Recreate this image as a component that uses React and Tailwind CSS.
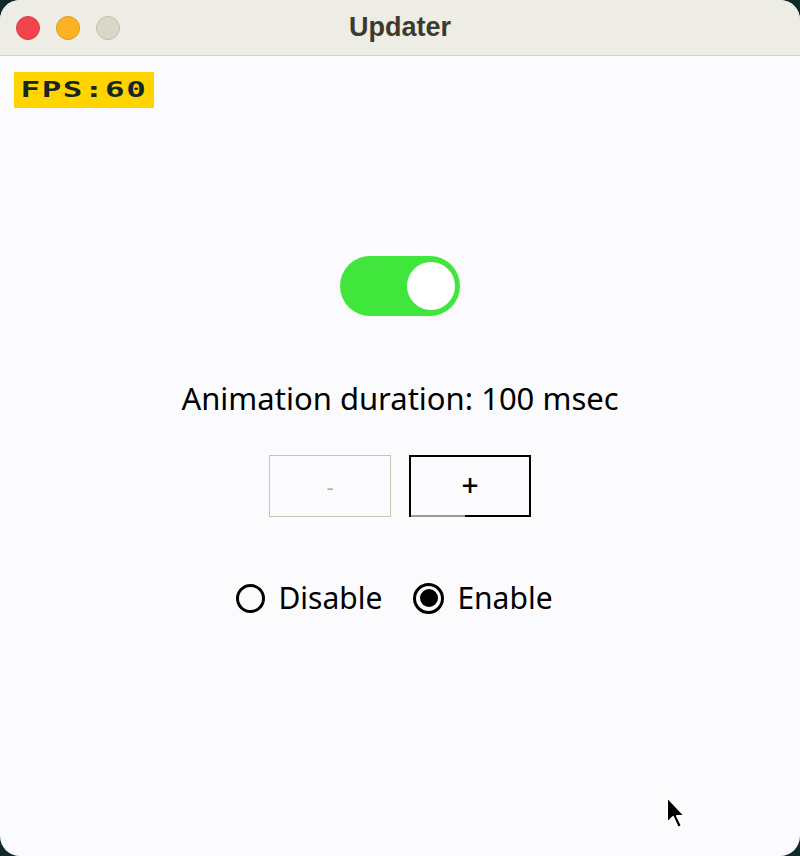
import React from "react";

export default function App() {
  return (
    <div className="w-[800px] h-[856px] bg-[#0e2a2a]">
      <div className="w-full h-full rounded-[20px] overflow-hidden bg-[#fbfbfd] flex flex-col relative">
        {/* Title bar */}
        <div className="h-[56px] shrink-0 bg-[#ededE5] border-b border-[#d2d2cc] grid grid-cols-[1fr_auto_1fr] items-center">
          <div className="flex items-center gap-[16px] pl-[16px]">
            <div className="w-[24px] h-[24px] rounded-full bg-[#f1444d] border border-[#d83a40]" />
            <div className="w-[24px] h-[24px] rounded-full bg-[#fbb225] border border-[#dc9a20]" />
            <div className="w-[24px] h-[24px] rounded-full bg-[#d8d8c8] border border-[#bdbdb0]" />
          </div>
          <div
            className="text-[27px] font-bold text-[#3b3a2c] leading-none"
            style={{ fontFamily: '"Liberation Sans", Arial, sans-serif' }}
          >
            Updater
          </div>
          <div />
        </div>

        {/* FPS badge */}
        <div className="mt-[16px] ml-[14px] w-[140px] h-[36px] bg-[#ffd400] flex items-center justify-center overflow-hidden">
          <span
            className="inline-block text-[21px] font-bold text-[#142626] leading-none scale-x-[1.55] tracking-[1px]"
            style={{ fontFamily: '"DejaVu Sans Mono", "DejaVu Sans", monospace' }}
          >
            FPS:60
          </span>
        </div>

        {/* Content */}
        <div
          className="flex flex-col items-center text-black"
          style={{ fontFamily: '"Noto Sans", "Open Sans", sans-serif' }}
        >
          {/* Toggle */}
          <div className="mt-[148px] w-[120px] h-[60px] rounded-full bg-[#40e63c] flex items-center justify-end pr-[5px]">
            <div className="w-[48px] h-[48px] rounded-full bg-white" />
          </div>

          <div className="mt-[62px] text-[31px] leading-[40px]">
            Animation duration: 100 msec
          </div>

          <div className="mt-[37px] flex gap-[18px]">
            <div className="w-[122px] h-[62px] border border-[#c8c6b0] flex items-center justify-center text-[22px] text-[#b4b2a0]">
              -
            </div>
            <div className="relative w-[122px] h-[62px] border-2 border-black flex items-center justify-center text-[30px] font-medium text-black leading-none pb-[2px]">
              +
              <div className="absolute left-0 bottom-[-2px] w-[54px] h-[2px] bg-[#9a9a9a]" />
            </div>
          </div>

          <div className="mt-[61px] mr-[11px] flex items-center text-[30px] leading-[40px]">
            <div className="w-[29px] h-[29px] rounded-full border-[3px] border-black" />
            <span className="ml-[13px]">Disable</span>
            <div className="ml-[31px] w-[31px] h-[31px] rounded-full border-[3px] border-black flex items-center justify-center">
              <div className="w-[18px] h-[18px] rounded-full bg-black" />
            </div>
            <span className="ml-[13px]">Enable</span>
          </div>
        </div>

        {/* Cursor */}
        <svg
          className="absolute left-[664px] top-[795px]"
          width="28"
          height="38"
          viewBox="0 0 28 38"
        >
          <path
            d="M3 2 L3 28 L9 22 L14 33 L18 31 L13 21 L21 21 Z"
            fill="black"
            stroke="white"
            strokeWidth="2"
            strokeLinejoin="round"
          />
        </svg>
      </div>
    </div>
  );
}
